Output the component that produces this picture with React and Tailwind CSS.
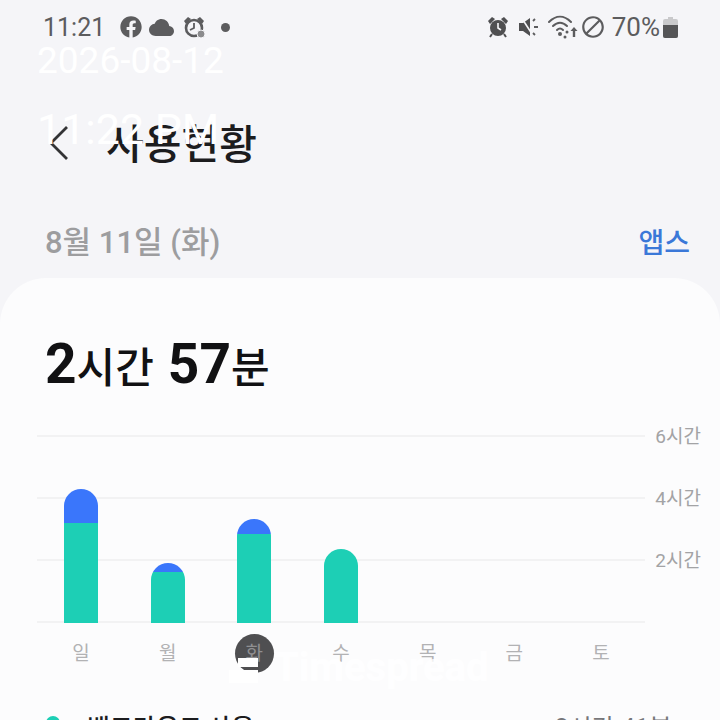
import { FaFacebook } from "react-icons/fa";
import { IoCloudSharp } from "react-icons/io5";
import { MdOutlineBlock } from "react-icons/md";

const font = "font-['Roboto','Noto_Sans_CJK_KR',sans-serif]";

const days = [
  { label: "일", green: 100, blue: 34 },
  { label: "월", green: 51, blue: 9 },
  { label: "화", green: 89, blue: 15, active: true },
  { label: "수", green: 74, blue: 0 },
  { label: "목", green: 0, blue: 0 },
  { label: "금", green: 0, blue: 0 },
  { label: "토", green: 0, blue: 0 },
];

function AlarmBadge() {
  return (
    <svg width="23" height="24" viewBox="0 0 23 24" className="ml-[9px]">
      <circle cx="11" cy="13" r="8" fill="none" stroke="#5c5c5e" strokeWidth="2.6" />
      <path d="M1 6l4-4 3 2-5 5zM21 6l-4-4-3 2 5 5z" fill="#5c5c5e" />
      <path d="M11 8v5l-4 2" fill="none" stroke="#5c5c5e" strokeWidth="1.8" />
      <circle cx="18" cy="19" r="4" fill="#8b8b8d" stroke="#f5f5f8" />
    </svg>
  );
}

function AlarmFilled() {
  return (
    <svg width="22" height="22" viewBox="0 0 22 22">
      <circle cx="11" cy="12" r="8" fill="#4f4f51" />
      <path d="M1 5l4-4 3 2-5 5zM21 5l-4-4-3 2 5 5z" fill="#4f4f51" />
      <path d="M3 21l2-3M19 21l-2-3" stroke="#4f4f51" strokeWidth="2" />
      <path d="M11 7v5l3 2" fill="none" stroke="#f5f5f8" strokeWidth="1.6" />
    </svg>
  );
}

function MuteIcon() {
  return (
    <svg width="22" height="22" viewBox="0 0 22 22" className="ml-[9px]">
      <path d="M1 7h4l7-5v18l-7-5H1z" fill="#4f4f51" />
      <path d="M3 1l13 20" stroke="#f5f5f8" strokeWidth="1.6" />
      <path d="M15 5l2-2M16 11h4M15 17l2 2" stroke="#5c5c5e" strokeWidth="1.8" />
    </svg>
  );
}

function WifiIcon() {
  return (
    <svg width="30" height="26" viewBox="0 0 30 26" className="ml-[8px]">
      <g fill="none" stroke="#5c5c5e" strokeWidth="2" strokeLinecap="round">
        <path d="M1 8c7-7 15-7 22 0" />
        <path d="M5 12c4.500-4.500 9.500-4.500 14 0" />
        <path d="M9 16c2-2 4-2 6 0" />
      </g>
      <circle cx="12" cy="20" r="2" fill="#5c5c5e" />
      <circle cx="19" cy="18" r="1.500" fill="#5c5c5e" />
      <circle cx="17" cy="23" r="1.500" fill="#5c5c5e" />
      <path d="M26 13l-3.500 4h2.300v6h2.400v-6h2.300z" fill="#5c5c5e" />
    </svg>
  );
}

function StatusBar() {
  return (
    <div className="flex items-center justify-between h-[28px] mt-[13px] pl-[43px] pr-[42px] text-[#5c5c5e]">
      <div className="flex items-center">
        <span className="text-[25px] leading-none w-[77px]">11:21</span>
        <FaFacebook className="w-[22px] h-[22px]" />
        <IoCloudSharp className="w-[25px] h-[25px] ml-[7px]" />
        <AlarmBadge />
        <span className="w-[9px] h-[9px] rounded-full bg-[#5c5c5e] ml-[15px]" />
      </div>
      <div className="flex items-center">
        <AlarmFilled />
        <MuteIcon />
        <WifiIcon />
        <MdOutlineBlock className="w-[26px] h-[26px] ml-[2px]" />
        <span className="text-[26px] leading-none ml-[6px]">70%</span>
        <svg width="15" height="22" viewBox="0 0 15 22" className="ml-[3px]">
          <path d="M5 1h5v2h3a2 2 0 0 1 2 2v15a2 2 0 0 1-2 2H2a2 2 0 0 1-2-2V5a2 2 0 0 1 2-2h3z" fill="#c9c9cb" />
          <path d="M0 9h15v11a2 2 0 0 1-2 2H2a2 2 0 0 1-2-2z" fill="#555557" />
        </svg>
      </div>
    </div>
  );
}

function Chart() {
  return (
    <div className="relative h-[271px]">
      <div className="flex flex-col pl-[37px] pr-[19px]">
        {["6시간", "4시간", "2시간", ""].map((hours) => (
          <div key={hours} className="flex items-center h-[62px]">
            <div className="flex-1 h-[2px] bg-[#f2f2f3]" />
            <span className="w-[56px] text-right text-[19px] leading-none text-[#a3a3a5]">{hours}</span>
          </div>
        ))}
      </div>
      <div className="absolute left-[37px] w-[608px] top-[32px] h-[186px] flex justify-between items-end px-[27px]">
        {days.map((day) => (
          <div key={day.label} className="w-[34px] flex flex-col rounded-t-[17px] overflow-hidden">
            {day.blue > 0 && <div className="bg-[#3a76fb]" style={{ height: day.blue }} />}
            {day.green > 0 && <div className="bg-[#1dcfb5]" style={{ height: day.green }} />}
          </div>
        ))}
      </div>
      <div className="absolute left-[37px] w-[608px] top-[228px] flex justify-between px-[27px] text-[19px] leading-none text-[#b2b2b4]">
        {days.map((day) => (
          <div key={day.label} className="relative w-[34px] h-[40px] flex items-center justify-center">
            {day.active && <div className="absolute w-[39px] h-[39px] rounded-full bg-[#4f4f51]" />}
            <span className={day.active ? "relative text-[#8f8f91]" : "relative"}>{day.label}</span>
          </div>
        ))}
      </div>
    </div>
  );
}

export default function App() {
  return (
    <div className={`relative w-[720px] h-[720px] overflow-hidden bg-[#f5f5f8] ${font}`}>
      <StatusBar />

      <div className="flex items-center h-[60px] mt-[72px] pl-[48px]">
        <svg width="21" height="36" viewBox="0 0 21 36">
          <path d="M19 2L3 18l16 16" fill="none" stroke="#333335" strokeWidth="2.800" />
        </svg>
        <h1 className="ml-[37px] mt-[4px] text-[41px] leading-none font-medium text-[#1c1c1e]">사용현황</h1>
      </div>

      <div className="flex items-center justify-between h-[40px] mt-[49px] pl-[45px] pr-[30px]">
        <span className="text-[31px] leading-none font-medium text-[#9d9d9f]">8월 11일 (화)</span>
        <span className="mt-[3px] text-[28px] leading-none font-medium text-[#3b78d8]">앱스</span>
      </div>

      <div className="mt-[16px] h-[442px] rounded-t-[46px] bg-[#fcfcfd] pt-[59px] overflow-hidden">
        <div className="h-[68px] pl-[45px] flex items-baseline text-[#111113] font-bold leading-none">
          <span className="text-[55px]">2</span>
          <span className="text-[42px] font-medium">시간</span>
          <span className="text-[55px] ml-[14px]">57</span>
          <span className="text-[42px] font-medium">분</span>
        </div>
        <Chart />
        <div className="flex items-start justify-between mt-[40px] pl-[46px] pr-[48px] text-[25px] leading-none">
          <div className="flex items-start">
            <span className="w-[14px] h-[14px] rounded-full bg-[#1dcfb5]" />
            <span className="ml-[27px] font-medium text-[#1c1c1e]">백그라운드 사용</span>
          </div>
          <span className="text-[#77777a]">2시간 41분</span>
        </div>
      </div>

      <div className="absolute left-[37px] top-[42px] text-[37px] leading-none text-white">2026-08-12</div>
      <div className="absolute left-[37px] top-[108px] text-[43px] leading-none text-white">11:22 PM</div>
      <div className="absolute left-[229px] top-[648px] flex items-center text-[40px] leading-none font-bold text-white/80">
        <svg width="29" height="30" viewBox="0 0 29 30" className="mr-[16px]">
          <path d="M9 5h20v9H9zM0 17h29v13H0z" fill="#fff" />
        </svg>
        Timespread
      </div>
    </div>
  );
}
